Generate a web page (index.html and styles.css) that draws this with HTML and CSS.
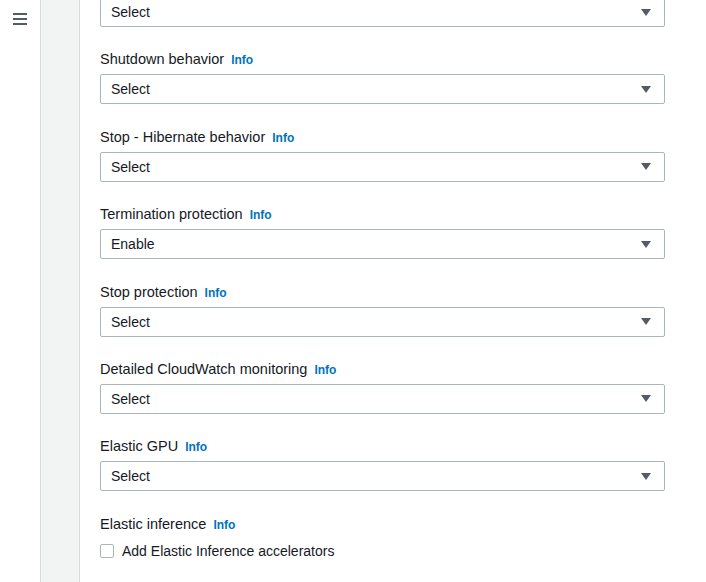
FILE: index.html
```html
<!DOCTYPE html>
<html>
<head>
<meta charset="utf-8">
<link rel="stylesheet" href="styles.css">
</head>
<body>
<div class="nav">
  <svg class="menu" width="14" height="12" viewBox="0 0 14 12"><rect x="0" y="0" width="14" height="2" fill="#545b64"/><rect x="0" y="5" width="14" height="2" fill="#545b64"/><rect x="0" y="10" width="14" height="2" fill="#545b64"/></svg>
</div>
<div class="strip"></div>
<main class="main">
  <div class="form">
    <div class="select"><span>Select</span><span class="caret"></span></div>
    <div class="field">
      <div class="label">Shutdown behavior <a class="info">Info</a></div>
      <div class="select"><span>Select</span><span class="caret"></span></div>
    </div>
    <div class="field">
      <div class="label">Stop - Hibernate behavior <a class="info">Info</a></div>
      <div class="select"><span>Select</span><span class="caret"></span></div>
    </div>
    <div class="field">
      <div class="label">Termination protection <a class="info">Info</a></div>
      <div class="select"><span>Enable</span><span class="caret"></span></div>
    </div>
    <div class="field">
      <div class="label">Stop protection <a class="info">Info</a></div>
      <div class="select"><span>Select</span><span class="caret"></span></div>
    </div>
    <div class="field">
      <div class="label">Detailed CloudWatch monitoring <a class="info">Info</a></div>
      <div class="select"><span>Select</span><span class="caret"></span></div>
    </div>
    <div class="field">
      <div class="label">Elastic GPU <a class="info">Info</a></div>
      <div class="select"><span>Select</span><span class="caret"></span></div>
    </div>
    <div class="field">
      <div class="label">Elastic inference <a class="info">Info</a></div>
      <label class="check"><span class="box"></span>Add Elastic Inference accelerators</label>
    </div>
  </div>
</main>
</body>
</html>
```
FILE: styles.css
```css
html, body {
  margin: 0;
  padding: 0;
  height: 100%;
  overflow: hidden;
}
body {
  display: flex;
  font-family: "Liberation Sans", Arial, sans-serif;
  font-size: 14.5px;
  color: #16191f;
  background: #fff;
}
.nav {
  flex: none;
  border-right: 1px solid #d5dbdb;
  padding: 13px 0 0 13px;
  width: 27px;
}
.menu { display: block; }
.strip {
  width: 38px;
  flex: none;
  background: #f2f3f3;
  border-right: 1px solid #d5dbdb;
}
.main {
  flex: 1;
  padding-left: 20px;
}
.form {
  width: 565px;
  margin-top: -3px;
  display: flex;
  flex-direction: column;
  gap: 22.4px;
}
.field {
  display: flex;
  flex-direction: column;
  gap: 5px;
}
.label {
  line-height: 20px;
  height: 20px;
}
.info {
  font-size: 12px;
  font-weight: bold;
  color: #0073bb;
  margin-left: 3px;
}
.select {
  height: 30px;
  box-sizing: border-box;
  border: 1px solid #aab7b8;
  border-radius: 2px;
  display: flex;
  align-items: center;
  justify-content: space-between;
  padding: 0 13px 0 10px;
  line-height: 20px;
  font-size: 14px;
}
.caret {
  width: 0;
  height: 0;
  border-left: 5px solid transparent;
  border-right: 5px solid transparent;
  border-top: 7px solid #545b64;
}
.check {
  display: flex;
  align-items: center;
  line-height: 20px;
  margin-top: 2px;
  font-size: 14px;
}
.box {
  width: 14px;
  height: 14px;
  box-sizing: border-box;
  border: 1px solid #aab7b8;
  border-radius: 2px;
  margin-right: 8px;
}
```
